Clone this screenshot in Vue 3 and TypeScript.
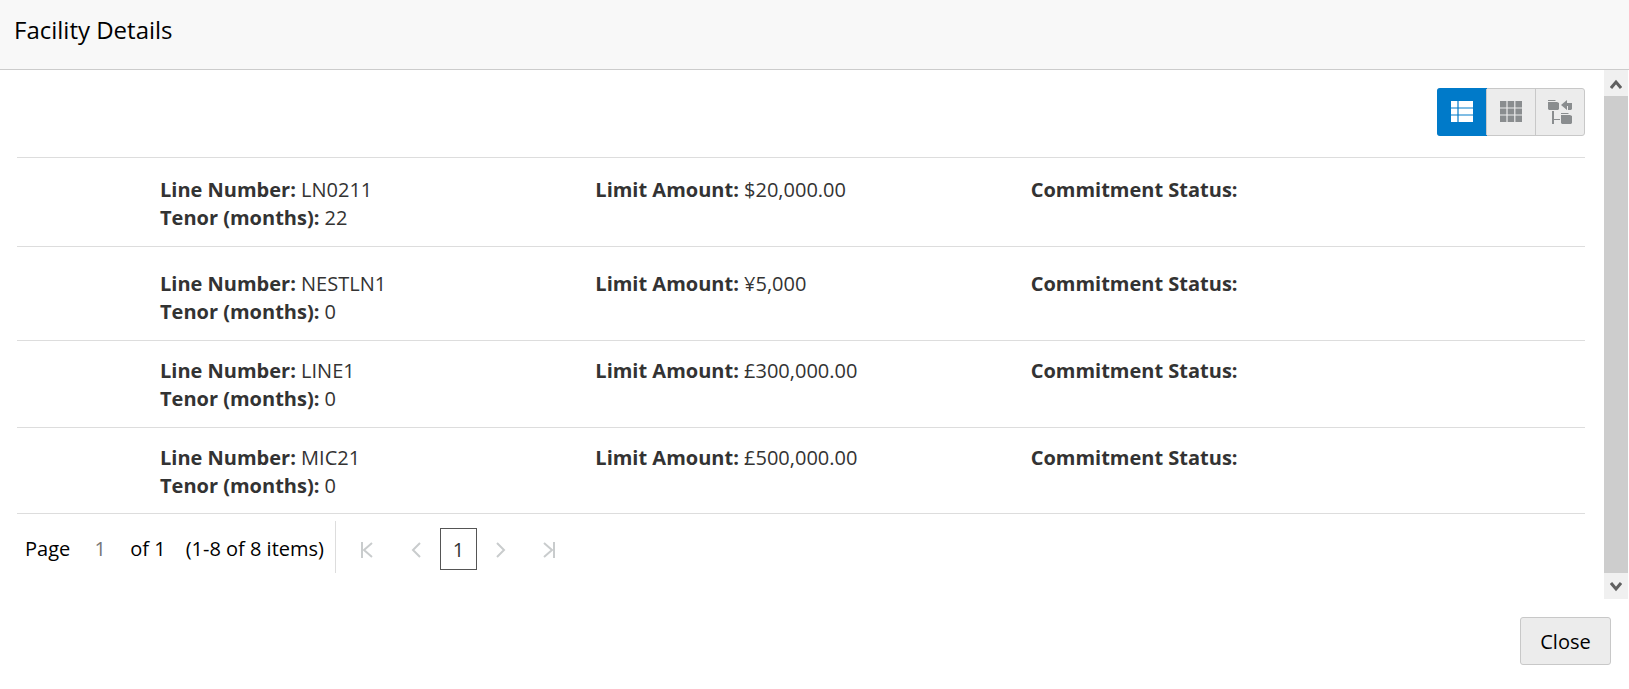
<script setup lang="ts">
import { ref } from 'vue'

interface Facility {
  line: string
  tenor: number
  limit: string
  status: string
  size: string
}

const facilities: Facility[] = [
  { line: 'LN0211', tenor: 22, limit: '$20,000.00', status: '', size: 'medium' },
  { line: 'NESTLN1', tenor: 0, limit: '¥5,000', status: '', size: 'tall' },
  { line: 'LINE1', tenor: 0, limit: '£300,000.00', status: '', size: '' },
  { line: 'MIC21', tenor: 0, limit: '£500,000.00', status: '', size: '' },
]

const view = ref('list')
const page = ref('1')
</script>

<template>
  <section class="dialog" aria-labelledby="dialog-title">
    <header class="head">
      <h1 id="dialog-title">Facility Details</h1>
    </header>

    <div class="middle">
      <main class="content">
        <div class="toolbar">
          <div class="views" role="group" aria-label="View">
            <button type="button" class="view" :class="{ on: view === 'list' }" aria-label="List view" @click="view = 'list'">
              <svg width="22" height="22" viewBox="0 0 22 22" fill="currentColor">
                <path d="M0 0h6.4v6.4H0zM7.6 0H22v6.4H7.6zM0 7.6h6.4v5.8H0zM7.6 7.6H22v5.8H7.6zM0 14.6h6.4V21H0zM7.6 14.6H22V21H7.6z" />
              </svg>
            </button>
            <button type="button" class="view" :class="{ on: view === 'grid' }" aria-label="Grid view" @click="view = 'grid'">
              <svg width="22" height="22" viewBox="0 0 22 22" fill="currentColor">
                <path d="M0 0h6.4v6.4H0zM7.6 0h6.6v6.4H7.6zM15.4 0H22v6.4h-6.6zM0 7.6h6.4v5.8H0zM7.6 7.6h6.6v5.8H7.6zM15.4 7.6H22v5.8h-6.6zM0 14.6h6.4V21H0zM7.6 14.6h6.6V21H7.6zM15.4 14.6H22V21h-6.6z" />
              </svg>
            </button>
            <button type="button" class="view" :class="{ on: view === 'tree' }" aria-label="Hierarchy view" @click="view = 'tree'">
              <svg width="24" height="24" viewBox="0 0 24 24" fill="currentColor">
                <path d="M0 0h7l1 1H0zM0 2h9l2 1v6l-1 1H1L0 9zM13 13h7l1 1h-8zM13 15h9l2 1v7l-1 1h-9l-1-1z" />
                <path d="M4 11h2v8h6v1H6v4H4z" />
                <path d="M13 5l6-5v3h5v6l-1 1h-3V6h-1v4z" />
              </svg>
            </button>
          </div>
        </div>

        <ul class="list">
          <li v-for="f in facilities" :key="f.line" class="row" :class="f.size">
            <div class="cell">
              <p><b>Line Number:</b> {{ f.line }}</p>
              <p><b>Tenor (months):</b> {{ f.tenor }}</p>
            </div>
            <div class="cell">
              <p><b>Limit Amount:</b> {{ f.limit }}</p>
            </div>
            <div class="cell">
              <p><b>Commitment Status:</b> {{ f.status }}</p>
            </div>
          </li>
        </ul>

        <nav class="pager" aria-label="Pagination">
          <div class="summary">
            <label for="page">Page</label>
            <input id="page" v-model="page" type="text" />
            <span class="total">of 1</span>
            <span>(1-8 of 8 items)</span>
          </div>
          <div class="steps">
            <button type="button" class="step" aria-label="First page" disabled>
              <svg width="14" height="16" viewBox="0 0 14 16"><path d="M3 0v16M13 1L5 8l8 7" /></svg>
            </button>
            <button type="button" class="step" aria-label="Previous page" disabled>
              <svg width="14" height="16" viewBox="0 0 14 16"><path d="M12 1L5 8l7 7" /></svg>
            </button>
            <button type="button" class="current" aria-current="page">1</button>
            <button type="button" class="step" aria-label="Next page" disabled>
              <svg width="14" height="16" viewBox="0 0 14 16"><path d="M3 1l7 7-7 7" /></svg>
            </button>
            <button type="button" class="step" aria-label="Last page" disabled>
              <svg width="14" height="16" viewBox="0 0 14 16"><path d="M1 1l8 7-8 7M11 0v16" /></svg>
            </button>
          </div>
        </nav>
      </main>

      <div class="scroll">
        <button type="button" class="arrow" aria-label="Scroll up">
          <svg width="12" height="12" viewBox="0 0 12 12"><path d="M1 10l5-6 5 6" /></svg>
        </button>
        <div class="thumb"></div>
        <button type="button" class="arrow" aria-label="Scroll down">
          <svg width="12" height="12" viewBox="0 0 12 12"><path d="M1 2l5 6 5-6" /></svg>
        </button>
      </div>
    </div>

    <footer class="foot">
      <button type="button" class="close">Close</button>
    </footer>
  </section>
</template>

<style>
body {
  margin: 0;
  background: #fff;
}
</style>

<style scoped>
.dialog {
  min-height: 100vh;
  box-sizing: border-box;
  display: flex;
  flex-direction: column;
  font: 20px/28px "Segoe UI", "Open Sans", "Noto Sans", sans-serif;
  color: #000;
}
button,
input {
  box-sizing: border-box;
  margin: 0;
  padding: 0;
  border: 0;
  font: inherit;
  color: inherit;
  background: none;
}
svg {
  display: block;
}
.head {
  padding: 14px 14px 23px;
  background: #f8f8f8;
  border-bottom: 1px solid #ccc;
}
h1 {
  margin: 0;
  font-size: 24px;
  line-height: 32px;
  font-weight: 400;
}
.middle {
  flex: 1;
  display: flex;
  padding-right: 1px;
}
.content {
  flex: 1;
  padding: 18px 19px 0 17px;
}
.toolbar {
  display: flex;
  justify-content: flex-end;
  padding-bottom: 21px;
}
.views {
  display: flex;
  box-sizing: border-box;
  height: 48px;
  border: 1px solid #c8c8c8;
  border-radius: 3px;
  background: #ececec;
}
.view {
  width: 49px;
  display: flex;
  align-items: center;
  justify-content: center;
  color: #8a8d8f;
  border-left: 1px solid #c8c8c8;
}
.view:first-child {
  width: 48px;
  border-left: 0;
}
.view.on {
  color: #fff;
  background: #007ac9;
  box-shadow: 0 0 0 1px #007ac9;
  border-radius: 2px 0 0 2px;
}
.list {
  margin: 0;
  padding: 0;
  list-style: none;
  border-bottom: 1px solid #ddd;
}
.row {
  display: flex;
  padding: 16px 119px 14px 143px;
  border-top: 1px solid #ddd;
  color: #333;
}
.row.medium {
  padding-top: 18px;
}
.row.tall {
  padding-top: 23px;
}
.row:last-child {
  padding-bottom: 13px;
}
.cell {
  flex: 1;
}
.cell p {
  margin: 0;
}
.pager {
  display: flex;
  align-items: center;
  padding: 7px 0 0 8px;
}
.summary {
  display: flex;
  align-items: center;
  box-sizing: border-box;
  height: 52px;
  padding: 3px 11px 0 0;
  border-right: 1px solid #ddd;
}
#page {
  width: 60px;
  text-align: center;
  color: #777;
}
.total {
  margin-right: 20px;
}
.steps {
  display: flex;
  align-items: center;
  padding: 3px 0 0 6px;
}
.step {
  width: 49px;
  height: 42px;
  padding-top: 2px;
  display: flex;
  align-items: center;
  justify-content: center;
}
.step path {
  fill: none;
  stroke: #c9cccd;
  stroke-width: 2;
}
.current {
  width: 37px;
  height: 42px;
  padding-top: 2px;
  border: 1px solid #555;
  color: #333;
}
.scroll {
  display: flex;
  flex-direction: column;
  width: 24px;
  background: #f0f0f0;
}
.arrow {
  height: 26px;
  padding-top: 2px;
  display: flex;
  align-items: center;
  justify-content: center;
}
.arrow path {
  fill: none;
  stroke: #606060;
  stroke-width: 3;
}
.thumb {
  flex: 1;
  background: #cdcdcd;
}
.foot {
  display: flex;
  justify-content: flex-end;
  padding: 18px 18px 24px;
}
.close {
  width: 91px;
  height: 48px;
  padding-top: 2px;
  border: 1px solid #c8c8c8;
  border-radius: 3px;
  background: #ececec;
}
</style>
